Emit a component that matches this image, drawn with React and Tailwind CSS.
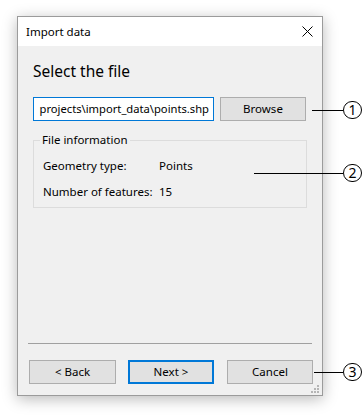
import React from "react";

function Callout({ n, top, left, width }) {
  return (
    <div className="absolute flex items-center" style={{ top, left }}>
      <div className="h-px bg-black" style={{ width }} />
      <div className="w-[19px] h-[18px] rounded-full border border-black flex items-center justify-center text-[14px] leading-none text-black bg-white">
        {n}
      </div>
    </div>
  );
}

function Btn({ children, primary }) {
  return (
    <div
      className={
        "h-[24px] flex items-center justify-center bg-[#e1e1e1] text-[11.5px] text-black " +
        (primary ? "border-2 border-[#0078d7]" : "border border-[#adadad]")
      }
    >
      {children}
    </div>
  );
}

export default function App() {
  return (
    <div
      className="relative w-[364px] h-[418px] bg-white pt-[16px] pl-[17px] overflow-hidden"
      style={{ fontFamily: '"Noto Sans", "Open Sans", sans-serif' }}
    >
      <div className="relative w-[306px] h-[380px] border border-[#9b9b9b] bg-[#f0f0f0] flex flex-col shadow-[0_3px_14px_rgba(0,0,0,0.28)]">
        {/* title bar */}
        <div className="h-[29px] bg-white flex items-center justify-between pl-[8px] pr-[9px]">
          <span className="text-[11.5px] text-black">Import data</span>
          <svg width="11" height="11" viewBox="0 0 11 11">
            <path d="M0.5 0.5 L10.5 10.5 M10.5 0.5 L0.5 10.5" stroke="#000" strokeWidth="1" />
          </svg>
        </div>
        {/* body */}
        <div className="flex-1 flex flex-col px-[15px]">
          <div className="mt-[14px] text-[15.5px] leading-[22px] text-black">Select the file</div>
          <div className="mt-[15px] flex gap-[6px]">
            <div className="w-[181px] h-[24px] border border-[#0078d7] bg-white flex items-center justify-end pr-[4px] overflow-hidden">
              <span className="text-[11.2px] text-black whitespace-nowrap">projects\import_data\points.shp</span>
            </div>
            <div className="w-[86px]">
              <Btn>Browse</Btn>
            </div>
          </div>
          <div className="mt-[19px] relative w-[274px] h-[68px] border border-[#dcdcdc]">
            <span className="absolute left-[6px] top-[-9px] px-[2px] bg-[#f0f0f0] text-[11.5px] leading-[16px] text-black">
              File information
            </span>
            <div className="pt-[16px] pl-[9px] grid grid-cols-[116px_1fr] gap-y-[8px] text-[11.5px] leading-[18px] text-black">
              <span>Geometry type:</span>
              <span>Points</span>
              <span>Number of features:</span>
              <span>15</span>
            </div>
          </div>
        </div>
        {/* footer */}
        <div className="px-[10px]">
          <div className="h-px bg-[#a0a0a0]" />
        </div>
        <div className="mt-[16px] mb-[11px] pl-[11px] flex gap-[12px]">
          <div className="w-[87px]">
            <Btn>&lt; Back</Btn>
          </div>
          <div className="w-[86px]">
            <Btn primary>Next &gt;</Btn>
          </div>
          <div className="w-[86px] ml-[1px]">
            <Btn>Cancel</Btn>
          </div>
        </div>
        <svg className="absolute right-[3px] bottom-[2px]" width="8" height="8" viewBox="0 0 8 8">
          <rect x="6" y="0" width="2" height="2" fill="#b5b5b5" />
          <rect x="3" y="3" width="2" height="2" fill="#b5b5b5" />
          <rect x="6" y="3" width="2" height="2" fill="#b5b5b5" />
          <rect x="0" y="6" width="2" height="2" fill="#b5b5b5" />
          <rect x="3" y="6" width="2" height="2" fill="#b5b5b5" />
          <rect x="6" y="6" width="2" height="2" fill="#b5b5b5" />
        </svg>
      </div>
      <Callout n="1" top={101} left={312} width={31} />
      <Callout n="2" top={164} left={254} width={89} />
      <Callout n="3" top={363} left={314} width={29} />
    </div>
  );
}
